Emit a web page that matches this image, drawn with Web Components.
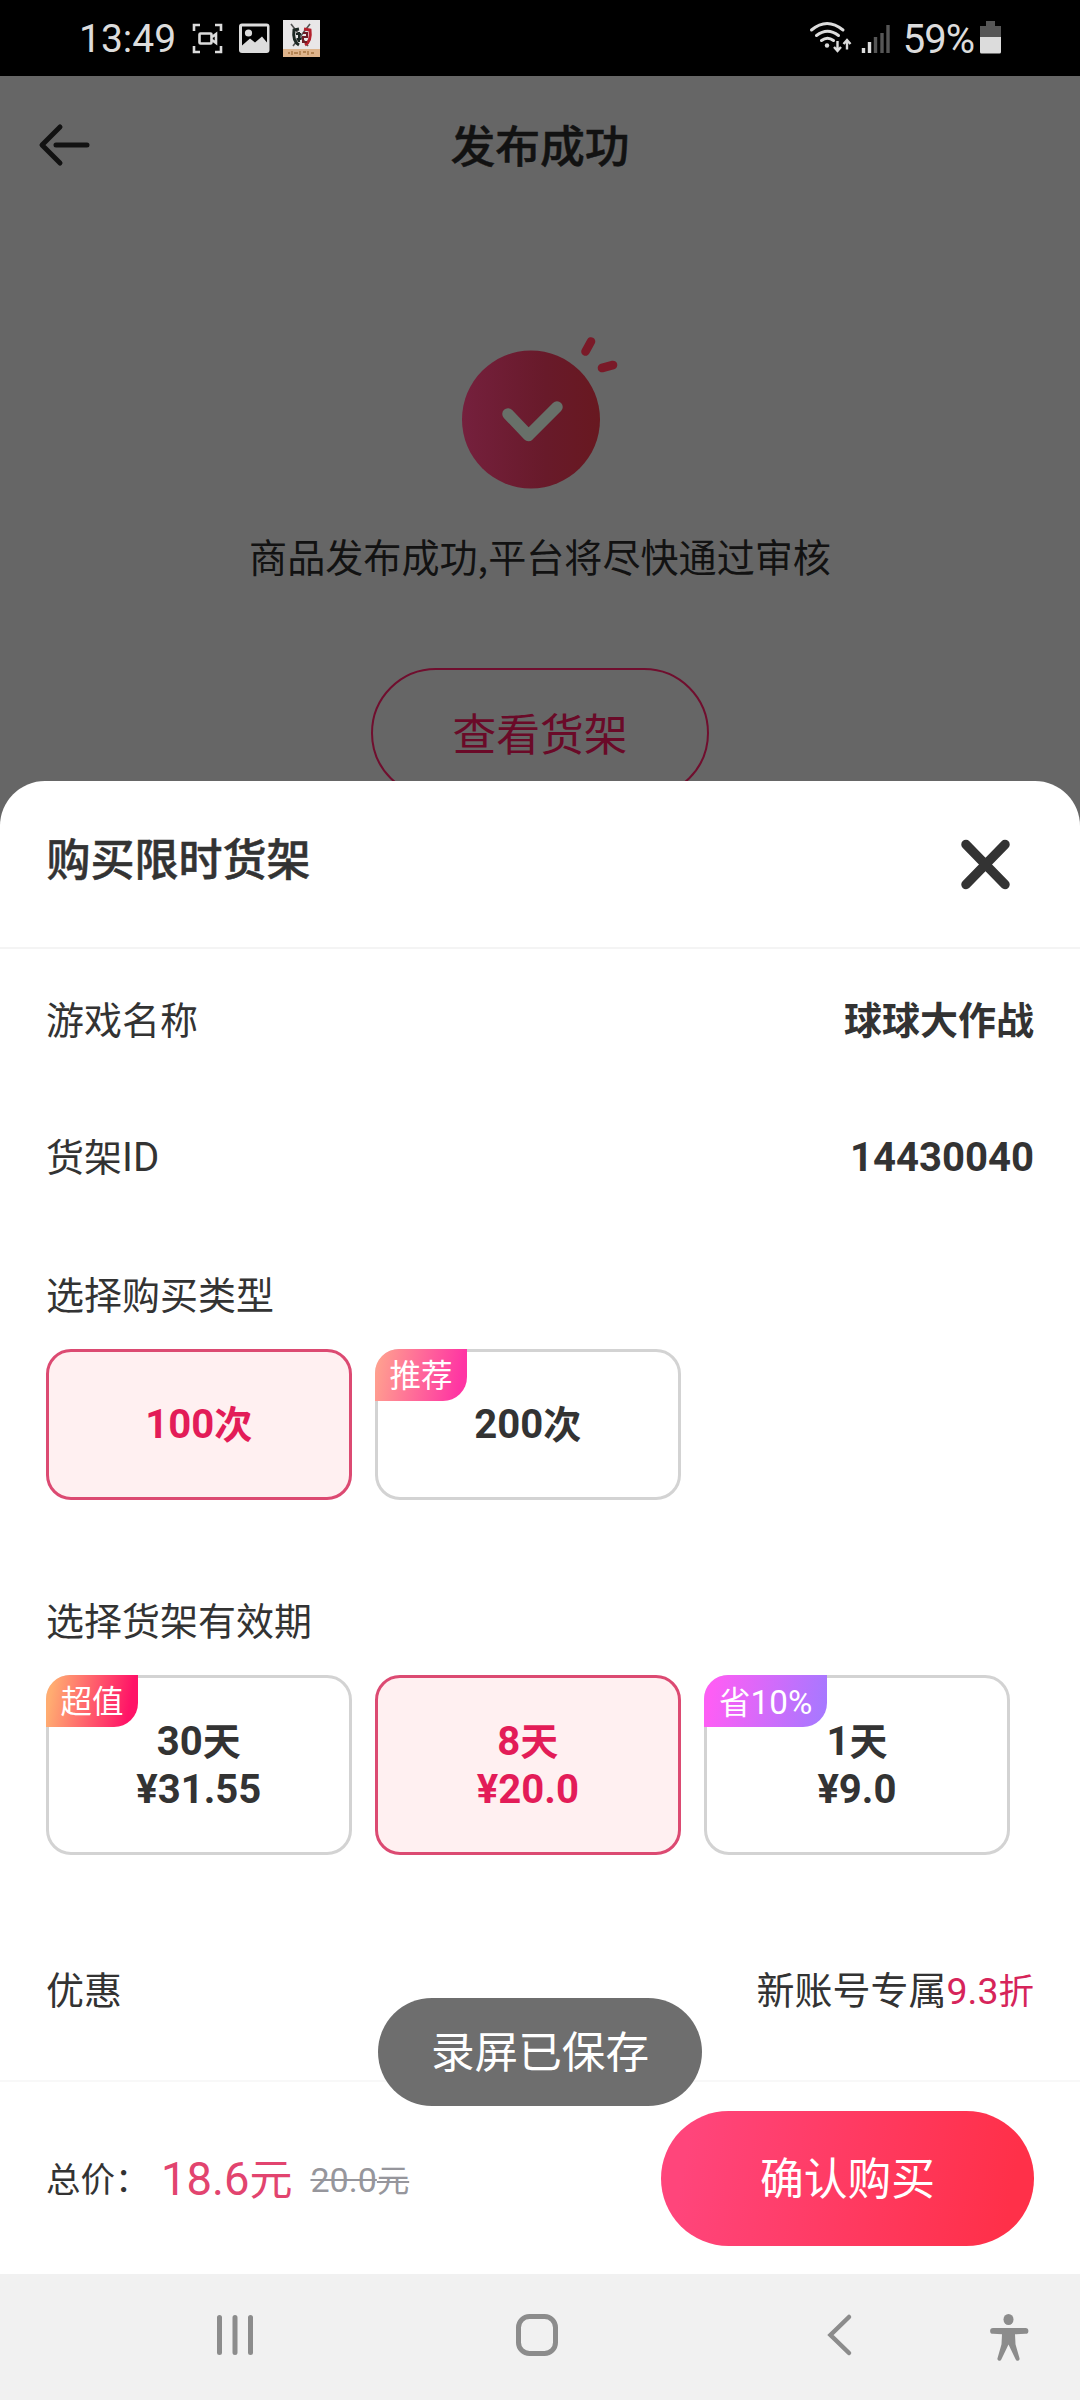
<!DOCTYPE html>
<html lang="zh-CN">
<head>
<meta charset="utf-8">
<title>购买限时货架</title>
<style>
html,body{margin:0;padding:0}
body{width:1080px;height:2400px;overflow:hidden;background:#666;font-family:Roboto,"Noto Sans CJK SC",sans-serif;color:#333;font-size:38px}
</style>
</head>
<body>
<phone-screen>
  <status-bar slot="status"></status-bar>
  <result-page slot="page"></result-page>
  <purchase-sheet slot="sheet">
    <info-row label="游戏名称"><b>球球大作战</b></info-row>
    <info-row label="货架" suffix="ID"><b><num-text>14430040</num-text></b></info-row>
    <option-group label="选择购买类型" style="--h:151px;--after:52px">
      <option-card selected><span><num-text>100</num-text>次</span></option-card>
      <option-card tag="推荐" style="--tag:linear-gradient(100deg,#ff9f8f 5%,#ff35a3 90%)"><span><num-text>200</num-text>次</span></option-card>
    </option-group>
    <option-group label="选择货架有效期" style="--h:180px;--after:90px">
      <option-card two tag="超值" style="--tag:linear-gradient(100deg,#ffac71 8%,#ff1467 88%)"><span><num-text>30</num-text>天</span><num-text>¥31.55</num-text></option-card>
      <option-card two selected><span><num-text>8</num-text>天</span><num-text>¥20.0</num-text></option-card>
      <option-card two tag="省10%" style="--tw:123px;--tag:linear-gradient(100deg,#fd5ef5 8%,#a878ff 95%)"><span><num-text>1</num-text>天</span><num-text>¥9.0</num-text></option-card>
    </option-group>
    <info-row label="优惠" style="--row:92px"><span>新账号专属</span><span style="color:#d6245a;font-size:35.5px"><num-text>9.3</num-text>折</span></info-row>
    <pay-bar slot="footer"></pay-bar>
  </purchase-sheet>
  <toast-pill slot="toast">录屏已保存</toast-pill>
  <nav-bar slot="nav"></nav-bar>
</phone-screen>
<script>
const define = (name, html) => customElements.define(name, class extends HTMLElement {
  constructor() {
    super();
    const t = document.createElement('template');
    t.innerHTML = typeof html === 'function' ? html(this) : html;
    this.attachShadow({ mode: 'open' }).appendChild(t.content.cloneNode(true));
  }
});

define('num-text', `<style>:host{display:inline;font-size:1.055em}</style><slot></slot>`);

define('phone-screen', `<style>
:host{display:grid;grid-template:76px 705px 1493px 126px/1080px;width:1080px;height:2400px}
slot{display:contents}
::slotted([slot=status]){grid-area:1/1}
::slotted([slot=page]){grid-area:2/1/4/2}
::slotted([slot=sheet]){grid-area:3/1}
::slotted([slot=toast]){grid-area:3/1;align-self:end;justify-self:center;margin-bottom:168px}
::slotted([slot=nav]){grid-area:4/1}
</style><slot name="status"></slot><slot name="page"></slot><slot name="sheet"></slot><slot name="toast"></slot><slot name="nav"></slot>`);

define('status-bar', `<style>
:host{display:flex;align-items:flex-start;justify-content:space-between;background:#000;color:#dcdcdc;font-size:40px;line-height:47px;padding:0 79px 0 79px;box-sizing:border-box;height:76px}
.g{display:flex}
span{padding-top:16px}
.time{font-size:39px;width:99px;white-space:nowrap}
svg{display:block}
</style>
<div class="g"><span class="time">13:49</span>
<svg width="144" height="76" viewBox="178 0 144 76" fill="none">
 <g stroke="#dcdcdc" stroke-width="2.6"><path d="M194 31v-6h6M215 25h6v6M221 46v6h-6M200 52h-6v-6"/><rect x="199.500" y="33.500" width="12" height="10" rx="1"/><path d="M212 37l4-3v9l-4-3"/></g>
 <rect x="239" y="23.500" width="30.500" height="29.500" rx="3" fill="#dcdcdc"/><path d="M242 26.500h25v16l-5-6-7 6-5-4-8 7z" fill="#000"/><circle cx="248.500" cy="33" r="3.600" fill="#dcdcdc"/>
 <rect x="283" y="20" width="37" height="37" fill="#e9e7e8"/><rect x="283" y="49" width="37" height="8" fill="#deb48c"/>
 <path d="M291 24l17 22M310 24l-17 22" stroke="#555" stroke-width="1.600"/>
 <path d="M299 29l-5 1c-1 7 0 12 5 15" stroke="#1d2824" stroke-width="3"/><path d="M304 29l6 1c1 7 0 12-5 15" stroke="#b3202c" stroke-width="3"/>
 <path d="M296 34h5M299 32v10M296.500 39h5" stroke="#1d2824" stroke-width="2"/><path d="M303 33h4v4h-4v5h4" stroke="#6d1c24" stroke-width="2"/>
 <path d="M288 53h2M292 51v4M294 53h4M300 51v4M303 52h3M308 51v4M311 53h3" stroke="#a5733f" stroke-width="1.300"/>
</svg></div>
<div class="g">
<svg width="94" height="76" viewBox="809 0 94 76" fill="none">
 <g stroke="#dcdcdc" stroke-width="3" stroke-linecap="round"><path d="M811.500 30q15.500-13 31.500 0M816.500 35.500q11-8.500 22 0M821.500 40.500q6-4.500 12 0"/></g>
 <circle cx="827" cy="45.500" r="2.200" fill="#dcdcdc"/>
 <path d="M837.500 41v9.500m-3.500-3.500l3.500 4 3.500-4M847 49.500v-9m-3.500 3.500l3.500-4 3.500 4" stroke="#dcdcdc" stroke-width="2.400"/>
 <path d="M863.500 48v5M869.500 42v11" stroke="#dcdcdc" stroke-width="3.400"/><path d="M875.500 37v16M882 33v20M888 25v28" stroke="#565656" stroke-width="3.400"/>
</svg><span style="letter-spacing:-1px">59%</span>
<svg width="27" height="76" viewBox="974 0 27 76"><path d="M986 21h9v5h6v11h-21v-11h6z" fill="#565656"/><path d="M980 37h21v15a1.500 1.500 0 0 1-1.500 1.500h-18a1.500 1.500 0 0 1-1.500-1.500z" fill="#dcdcdc"/></svg>
</div>`);

define('result-page', `<style>
:host{display:flex;flex-direction:column;align-items:center;background:#666;color:#121212}
header{display:grid;grid-template-columns:90px 1fr 90px;align-items:center;width:1080px;height:138px;text-align:center}
h1{margin:0;padding-top:5px;font-size:44.800px;line-height:60px;font-weight:500;-webkit-text-stroke:.5px currentColor}
svg{display:block}
.ok{margin:116px 0 0 4px}
p{margin:39px 0 0;font:38.100px/52px "Noto Sans CJK SC",sans-serif}
.btn{box-sizing:border-box;width:338px;height:130px;border:2px solid #700e2e;border-radius:65px;margin-top:86px;padding-top:5px;display:grid;place-items:center;font-size:43.800px;line-height:60px;color:#6a0a28}
</style>
<header><svg width="90" height="60" viewBox="0 0 90 60" fill="none" stroke="#121212" stroke-width="5" stroke-linecap="round" stroke-linejoin="round"><path d="M60 12L42 30l18 18M56 30h31"/></svg><h1>发布成功</h1></header>
<svg class="ok" width="160" height="161" viewBox="462 330 160 161"><defs><linearGradient id="r"><stop offset="0" stop-color="#75203d"/><stop offset=".6" stop-color="#681a2a"/><stop offset="1" stop-color="#681820"/></linearGradient></defs>
<circle cx="531" cy="419.500" r="69" fill="url(#r)"/><path d="M508 414l20.500 21.500L557 407" fill="none" stroke="#687069" stroke-width="11.500" stroke-linecap="round" stroke-linejoin="round"/><path d="M585.500 351.500l5.500-10M602 368l11-3" stroke="#7a1a28" stroke-width="8.600" stroke-linecap="round"/></svg>
<p>商品发布成功,平台将尽快通过审核</p>
<div class="btn">查看货架</div>`);

define('purchase-sheet', `<style>
:host{display:flex;flex-direction:column;background:#fff;border-radius:45px 45px 0 0;position:relative}
header{display:flex;justify-content:space-between;align-items:center;height:168px;box-sizing:border-box;padding:0 66px 0 46.500px;border-bottom:2px solid #f4f4f4}
h2{margin:0;font-size:44px;line-height:60px;font-weight:500;padding-bottom:6px;-webkit-text-stroke:.5px currentColor}
main{flex:1;display:flex;flex-direction:column;padding:3px 46px 0}
svg{display:block}
</style>
<header><h2>购买限时货架</h2><svg width="57" height="57" viewBox="0 0 57 57" stroke="#333" stroke-width="9.500" stroke-linecap="round"><path d="M9 8.500l39 40M48 8.500l-39 40"/></svg></header>
<main><slot></slot></main><slot name="footer"></slot>`);

define('info-row', el => `<style>
:host{display:flex;justify-content:space-between;align-items:center;height:var(--row,137px);line-height:50px}
.v{display:flex;align-items:baseline}
::slotted(b){font-weight:700}
</style><span>${el.getAttribute('label')}${el.hasAttribute('suffix') ? `<num-text>${el.getAttribute('suffix')}</num-text>` : ''}</span><span class="v"><slot></slot></span>`);

define('option-group', el => `<style>
:host{display:block;margin-bottom:var(--after)}
.l{height:50px;line-height:50px;padding:45px 0 28px}
.c{display:grid;grid-template-columns:repeat(3,305.500px);grid-auto-rows:var(--h);column-gap:23.600px}
</style><div class="l">${el.getAttribute('label')}</div><div class="c"><slot></slot></div>`);

define('option-card', el => `<style>
:host{display:flex;flex-direction:column;align-items:center;justify-content:center;box-sizing:border-box;border:3px solid #d3d3d3;border-radius:25px;position:relative;font-weight:700;line-height:47px;background:#fff}
:host([two]){justify-content:flex-start;padding-top:40px}
:host([selected]){border-color:#dc4a72;background:#fff0f1;color:#e31c58}
.t{position:absolute;left:-3px;top:-3px;width:var(--tw,92px);height:52px;line-height:56px;border-radius:24px 0 24px 0;background:var(--tag);color:#fff;font-size:31.500px;font-weight:400;text-align:center}
</style>${el.hasAttribute('tag') ? `<div class="t">${el.getAttribute('tag').replace(/[0-9%]+/, m => `<num-text>${m}</num-text>`)}</div>` : ''}<slot></slot>`);

define('pay-bar', `<style>
:host{display:flex;align-items:center;height:194px;box-sizing:border-box;border-top:2px solid #f8f8f8;padding:0 46px;line-height:50px}
span{padding-top:4px}
.k{font-size:34.500px;width:115px;white-space:nowrap;overflow:hidden}
.p{font-size:43px;color:#e2446f;margin-right:18px}
.o{font-size:32.300px;color:#96969c;text-decoration:line-through;text-decoration-thickness:2px;flex:1}
button{all:unset;box-sizing:border-box;width:373px;height:135px;border-radius:68px;background:linear-gradient(100deg,#ff457b 8%,#ff3049 92%);color:#fff;font-size:43.800px;line-height:60px;padding-top:3px;text-align:center}
</style><span class="k">总价：</span><span class="p"><num-text>18.6</num-text>元</span><span class="o"><num-text>20.0</num-text>元</span><button>确认购买</button>`);

define('toast-pill', `<style>
:host{display:grid;place-items:center;box-sizing:border-box;width:324px;height:108px;padding-top:4px;border-radius:54px;background:#6e6e6e;color:#fff;font-size:43.600px;line-height:60px;z-index:1}
</style><span><slot></slot></span>`);

define('nav-bar', `<style>
:host{display:block;background:#f1f1f1}
svg{display:block}
</style><svg width="1080" height="126" viewBox="0 2274 1080 126" fill="none" stroke="#8c8c8c" stroke-width="5" stroke-linecap="round">
<path d="M219.500 2317.500v35M235 2317.500v35M250.500 2317.500v35"/><rect x="518.500" y="2316.500" width="37" height="37" rx="11"/><path d="M849 2317l-18.500 18 18.500 18" stroke-width="4.500" stroke-linejoin="miter"/>
<g fill="#8c8c8c" stroke="none"><ellipse cx="1008.500" cy="2319.500" rx="5" ry="5.500"/><path d="M993 2328h32.500a2.800 2.800 0 0 1 0 5.800l-10.500.5 .5 10 4 14a2 2 0 0 1-3.800 1.200l-7.200-15-7.200 15a2 2 0 0 1-3.800-1.200l4-14 .5-10-9-.5a2.800 2.800 0 0 1 0-5.800z"/></g></svg>`);
</script>
</body>
</html>
